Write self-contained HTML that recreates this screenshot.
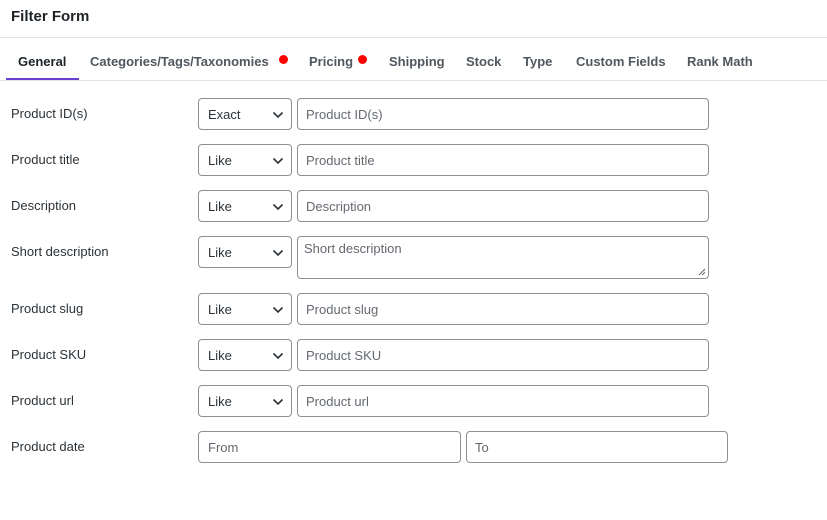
<!DOCTYPE html>
<html><head><style>
*{box-sizing:border-box;margin:0;padding:0}
body{width:827px;height:520px;background:#fff;font-family:"Liberation Sans",sans-serif;color:#2c3338;position:relative;overflow:hidden}
.a{position:absolute;white-space:nowrap}
.title{left:11px;top:8px;font-size:15px;font-weight:bold;color:#1d2327}
.sep{left:0;top:37px;width:827px;height:1px;background:#e5e5e5}
.tabline{left:0;top:80px;width:827px;height:1px;background:#e0e0e0}
.tab{top:54px;font-size:13px;font-weight:bold;color:#50575e}
.dot{width:9px;height:9px;border-radius:50%;background:#f00;top:55px}
.ul{left:6px;top:78px;width:73px;height:2px;background:#6b3fd1}
.lbl{left:11px;font-size:13px;color:#2c3338}
.box{border:1px solid #8c8f94;border-radius:4px;height:32px;font-size:13px;line-height:32px;padding-left:9px;background:#fff}
.sel{left:198px;width:94px;color:#2c3338}
.sel svg{position:absolute;right:7px;top:12px}
.inp{left:297px;width:412px;color:#646970;padding-left:8px}
</style></head><body>
<div class="a title">Filter Form</div>
<div class="a sep"></div>
<div class="a tab" style="left:18px;color:#1d2327">General</div>
<div class="a tab" style="left:90px">Categories/Tags/Taxonomies</div>
<div class="a dot" style="left:279px"></div>
<div class="a tab" style="left:309px">Pricing</div>
<div class="a dot" style="left:358px"></div>
<div class="a tab" style="left:389px">Shipping</div>
<div class="a tab" style="left:466px">Stock</div>
<div class="a tab" style="left:523px">Type</div>
<div class="a tab" style="left:576px">Custom Fields</div>
<div class="a tab" style="left:687px">Rank Math</div>
<div class="a tabline"></div>
<div class="a ul"></div>

<div class="a lbl" style="top:106px">Product ID(s)</div>
<div class="a box sel" style="top:98px">Exact<svg width="12" height="8" viewBox="0 0 12 8"><path d="M1.5 1.5L6 6l4.5-4.5" stroke="#2c3338" stroke-width="1.6" fill="none"/></svg></div>
<div class="a box inp" style="top:98px">Product ID(s)</div>

<div class="a lbl" style="top:152px">Product title</div>
<div class="a box sel" style="top:144px">Like<svg width="12" height="8" viewBox="0 0 12 8"><path d="M1.5 1.5L6 6l4.5-4.5" stroke="#2c3338" stroke-width="1.6" fill="none"/></svg></div>
<div class="a box inp" style="top:144px">Product title</div>

<div class="a lbl" style="top:198px">Description</div>
<div class="a box sel" style="top:190px">Like<svg width="12" height="8" viewBox="0 0 12 8"><path d="M1.5 1.5L6 6l4.5-4.5" stroke="#2c3338" stroke-width="1.6" fill="none"/></svg></div>
<div class="a box inp" style="top:190px">Description</div>

<div class="a lbl" style="top:244px">Short description</div>
<div class="a box sel" style="top:236px">Like<svg width="12" height="8" viewBox="0 0 12 8"><path d="M1.5 1.5L6 6l4.5-4.5" stroke="#2c3338" stroke-width="1.6" fill="none"/></svg></div>
<div class="a box inp" style="top:236px;height:43px;line-height:23px;padding-left:6px">Short description<svg style="position:absolute;right:2px;bottom:2px" width="8" height="8" viewBox="0 0 8 8"><path d="M7 1L1 7M7 4L4 7" stroke="#646970" stroke-width="1"/></svg></div>

<div class="a lbl" style="top:301px">Product slug</div>
<div class="a box sel" style="top:293px">Like<svg width="12" height="8" viewBox="0 0 12 8"><path d="M1.5 1.5L6 6l4.5-4.5" stroke="#2c3338" stroke-width="1.6" fill="none"/></svg></div>
<div class="a box inp" style="top:293px">Product slug</div>

<div class="a lbl" style="top:347px">Product SKU</div>
<div class="a box sel" style="top:339px">Like<svg width="12" height="8" viewBox="0 0 12 8"><path d="M1.5 1.5L6 6l4.5-4.5" stroke="#2c3338" stroke-width="1.6" fill="none"/></svg></div>
<div class="a box inp" style="top:339px">Product SKU</div>

<div class="a lbl" style="top:393px">Product url</div>
<div class="a box sel" style="top:385px">Like<svg width="12" height="8" viewBox="0 0 12 8"><path d="M1.5 1.5L6 6l4.5-4.5" stroke="#2c3338" stroke-width="1.6" fill="none"/></svg></div>
<div class="a box inp" style="top:385px">Product url</div>

<div class="a lbl" style="top:439px">Product date</div>
<div class="a box" style="left:198px;top:431px;width:263px;color:#646970">From</div>
<div class="a box" style="left:466px;top:431px;width:262px;color:#646970;padding-left:8px">To</div>
</body></html>
